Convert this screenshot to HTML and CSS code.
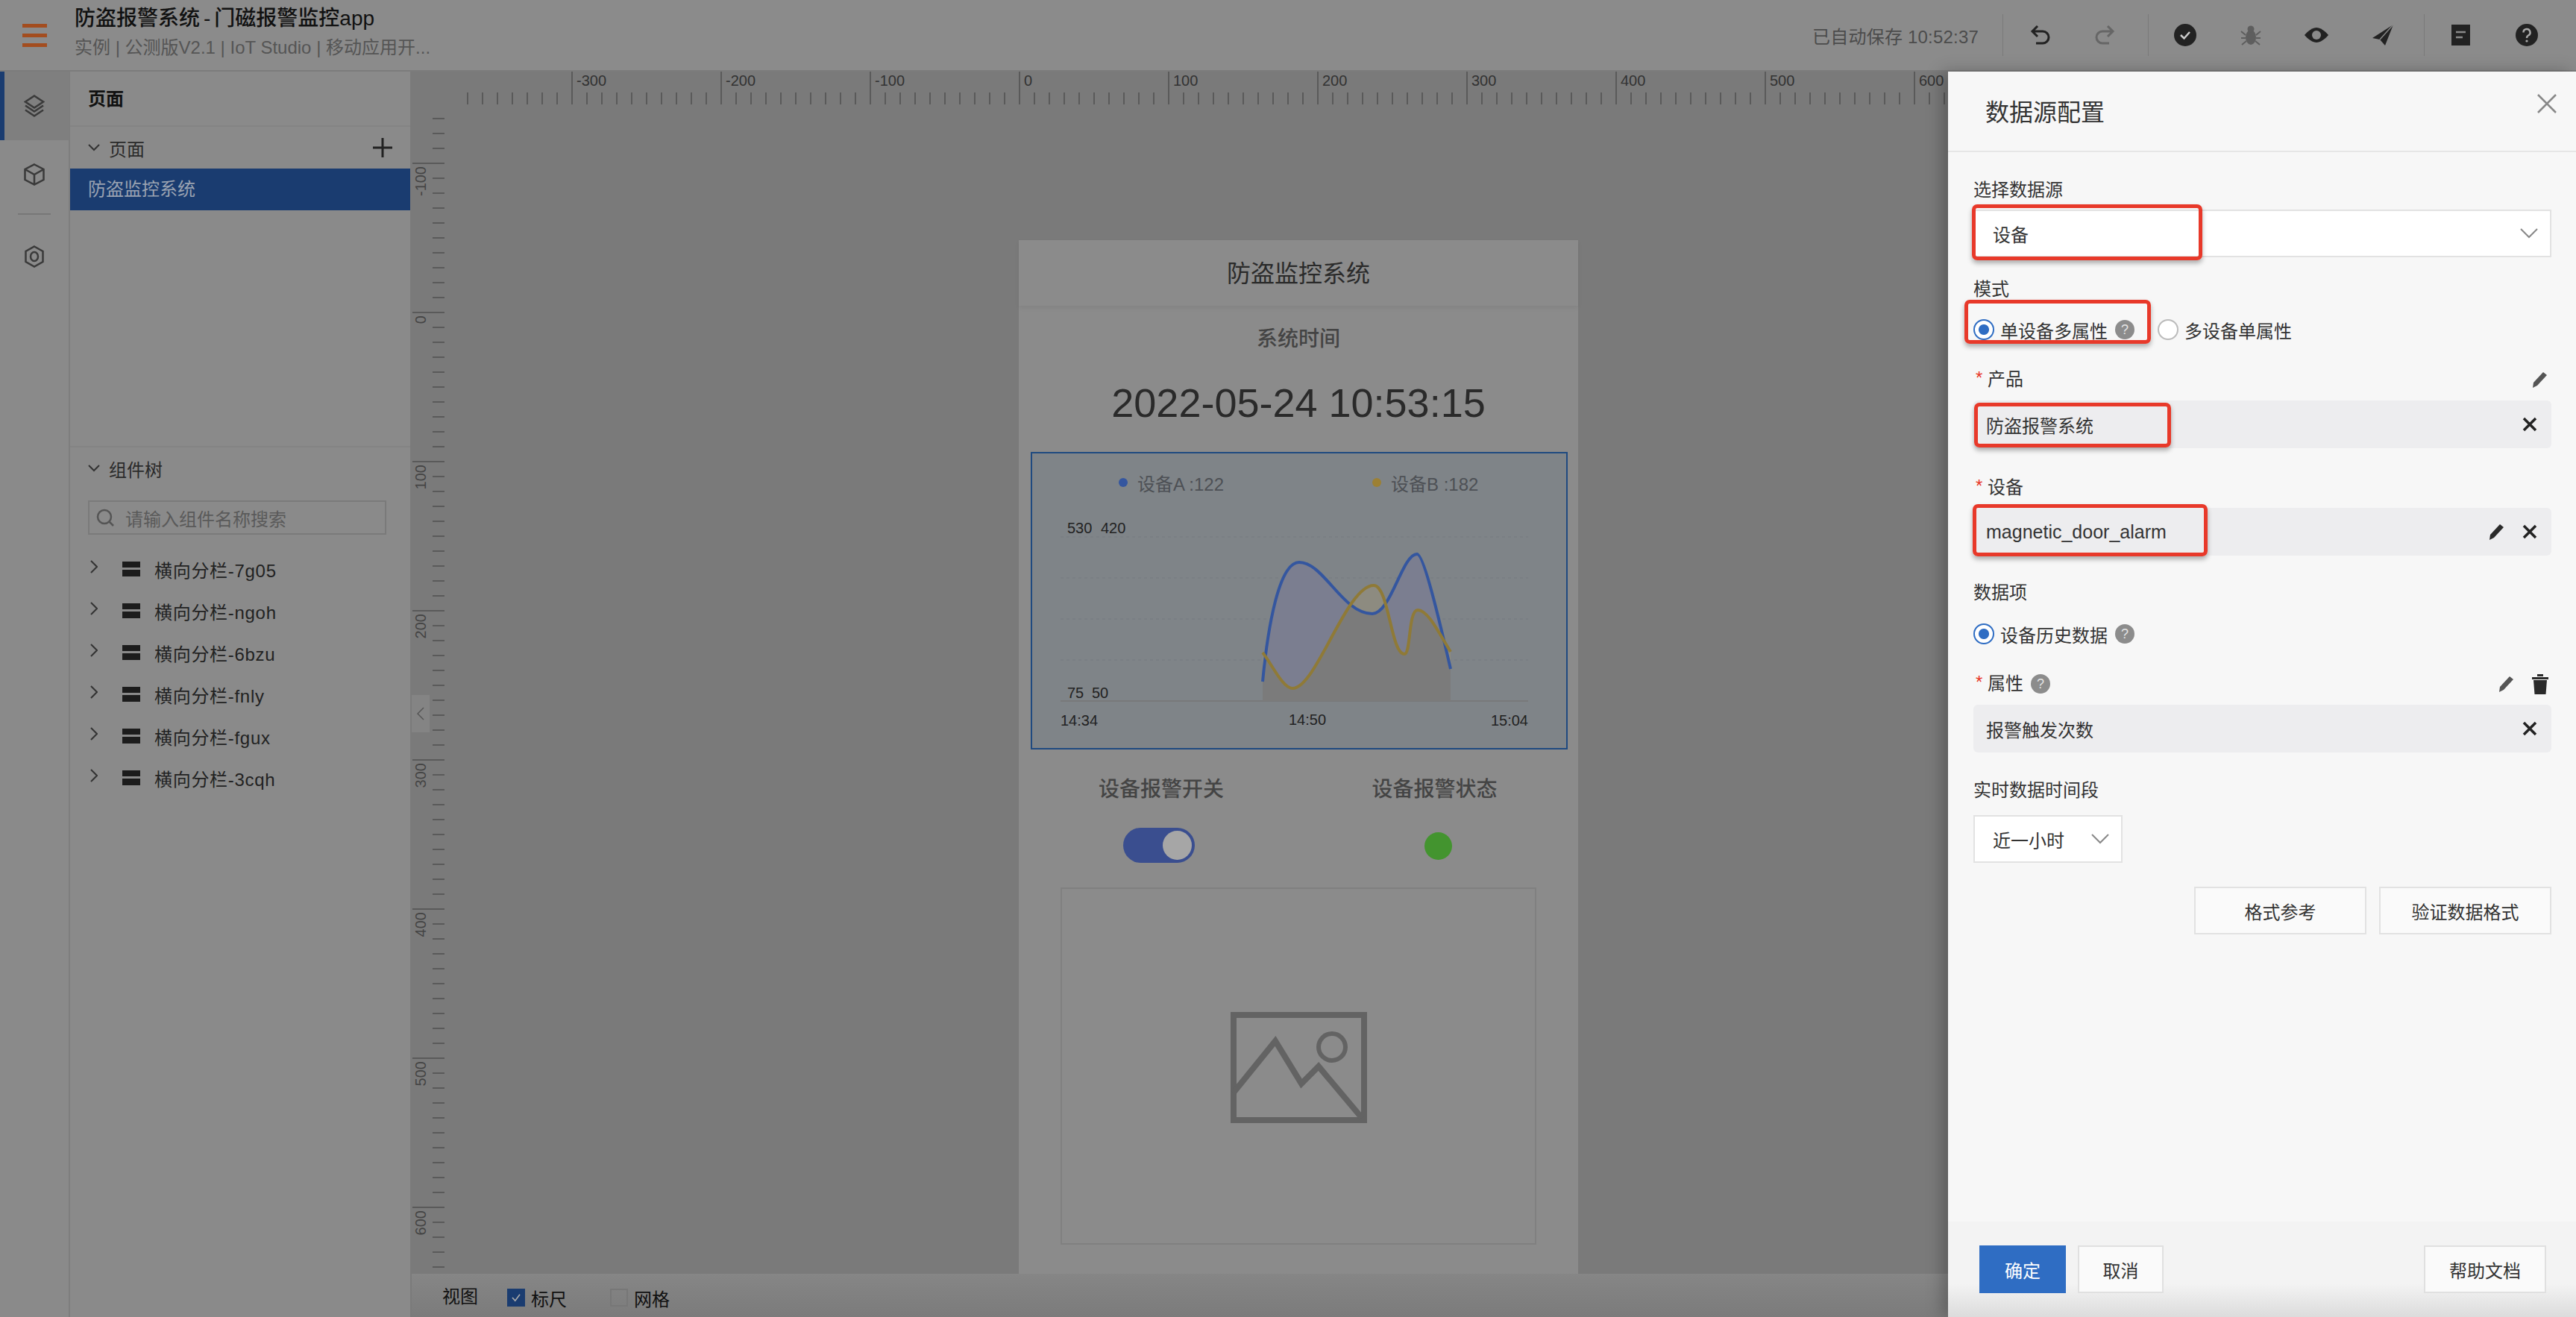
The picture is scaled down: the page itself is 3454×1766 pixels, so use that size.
FILE: index.html
```html
<!DOCTYPE html>
<html>
	<head>
		<title>防盗报警系统-门磁报警监控app</title>
		<meta charset="utf-8">
		<link rel="stylesheet" href="styles.css">
	</head>
	<body>
		<header class="topbar">
			<div class="burger"><i></i><i></i><i></i></div>
			<div class="app-title">
				<div class="app-name">防盗报警系统<span class="dash">-</span>门磁报警监控app</div>
				<div class="app-path">实例 | 公测版V2.1 | IoT Studio | 移动应用开...</div>
			</div>
			<div class="saved">已自动保存 10:52:37</div>
			<div class="tool-sep first"></div>
			<svg class="tool t-undo" viewBox="0 0 28 26"><path d="M10 1 3 8l7 7M4 8h13a8 8 0 0 1 0 16H8" fill="none" stroke="#222" stroke-width="3"/></svg>
			<svg class="tool t-redo" viewBox="0 0 28 26"><path d="M18 1l7 7-7 7M24 8H11a8 8 0 0 0 0 16h9" fill="none" stroke="#666" stroke-width="3"/></svg>
			<div class="tool-sep second"></div>
			<svg class="tool t-check" viewBox="0 0 30 30"><circle cx="15" cy="15" r="15" fill="#222"/><path d="M9 15l4.500 4.500L21 11" fill="none" stroke="#ccc" stroke-width="2.500"/></svg>
			<svg class="tool t-bug" viewBox="0 0 28 28"><ellipse cx="14" cy="17" rx="7" ry="10" fill="#5e5e5e"/><circle cx="14" cy="6" r="4.500" fill="#5e5e5e"/><path d="M1 9l6 5M27 9l-6 5M1 18h6M27 18h-6M2 27l6-5M26 27l-6-5" stroke="#5e5e5e" stroke-width="2"/></svg>
			<svg class="tool t-eye" viewBox="0 0 32 20"><path d="M16 0C24 0 32 10 32 10S24 20 16 20 0 10 0 10 8 0 16 0Z" fill="#222"/><circle cx="16" cy="10" r="6" fill="#8a8a8a"/></svg>
			<svg class="tool t-send" viewBox="0 0 28 28"><path d="M28 0 0 18l10 2 7 8Z" fill="#222"/><path d="M28 0 10 20" stroke="#8a8a8a" stroke-width="1.500"/></svg>
			<div class="tool-sep third"></div>
			<svg class="tool t-doc" viewBox="0 0 25 28"><rect width="25" height="28" fill="#222"/><path d="M6 10h13M6 17h9" stroke="#8a8a8a" stroke-width="2.500"/></svg>
			<svg class="tool t-help" viewBox="0 0 30 30"><circle cx="15" cy="15" r="15" fill="#222"/><path d="M10.500 11.500a4.500 4.500 0 1 1 6.500 4c-1.500.8-2 1.500-2 3.500" fill="none" stroke="#aaa" stroke-width="2.500"/><circle cx="15" cy="23" r="1.600" fill="#aaa"/></svg>
		</header>

		<div class="workspace">
			<nav class="rail">
				<div class="rail-item active">
					<svg viewBox="0 0 28 29"><path d="M14 1 26 9l-12 8L2 9Z" fill="none" stroke="#3a3a3a" stroke-width="2.500"/><path d="M2 14l12 8 12-8M2 20l12 8 12-8" fill="none" stroke="#3a3a3a" stroke-width="2.500"/></svg>
				</div>
				<div class="rail-item">
					<svg viewBox="0 0 28 30"><path d="M14 1.500 26.500 8v14L14 28.500 1.500 22V8Z M1.500 8 14 15l12.500-7M14 15v13" fill="none" stroke="#3a3a3a" stroke-width="2.500"/></svg>
				</div>
				<div class="rail-sep"></div>
				<div class="rail-item">
					<svg viewBox="0 0 26 30"><path d="M13 1.500 24.500 8v14L13 28.500 1.500 22V8Z" fill="none" stroke="#3a3a3a" stroke-width="2.500"/><ellipse cx="13" cy="15" rx="5" ry="6" fill="none" stroke="#3a3a3a" stroke-width="2.500"/></svg>
				</div>
			</nav>

			<aside class="pages">
				<div class="pages-head">页面</div>
				<div class="pages-top">
					<div class="tree-head">
						<svg class="chev-d" viewBox="0 0 16 10"><path d="M1 1l7 7 7-7" fill="none" stroke="#333" stroke-width="2"/></svg>
						<span>页面</span>
						<svg class="plus" viewBox="0 0 26 26"><path d="M13 0v26M0 13h26" stroke="#222" stroke-width="3"/></svg>
					</div>
					<div class="page-row">防盗监控系统</div>
				</div>
				<div class="pages-tree">
					<div class="tree-head">
						<svg class="chev-d" viewBox="0 0 16 10"><path d="M1 1l7 7 7-7" fill="none" stroke="#333" stroke-width="2"/></svg>
						<span>组件树</span>
					</div>
					<div class="search">
						<svg viewBox="0 0 24 24"><circle cx="11" cy="11" r="9" fill="none" stroke="#555" stroke-width="2.500"/><path d="M17 17l6 6" stroke="#555" stroke-width="2.500"/></svg>
						<span>请输入组件名称搜索</span>
					</div>
					<div class="node"><svg class="chev-r" viewBox="0 0 10 18"><path d="M1 1l8 8-8 8" fill="none" stroke="#333" stroke-width="2"/></svg><i class="bars"></i>横向分栏-7g05</div>
					<div class="node"><svg class="chev-r" viewBox="0 0 10 18"><path d="M1 1l8 8-8 8" fill="none" stroke="#333" stroke-width="2"/></svg><i class="bars"></i>横向分栏-ngoh</div>
					<div class="node"><svg class="chev-r" viewBox="0 0 10 18"><path d="M1 1l8 8-8 8" fill="none" stroke="#333" stroke-width="2"/></svg><i class="bars"></i>横向分栏-6bzu</div>
					<div class="node"><svg class="chev-r" viewBox="0 0 10 18"><path d="M1 1l8 8-8 8" fill="none" stroke="#333" stroke-width="2"/></svg><i class="bars"></i>横向分栏-fnly</div>
					<div class="node"><svg class="chev-r" viewBox="0 0 10 18"><path d="M1 1l8 8-8 8" fill="none" stroke="#333" stroke-width="2"/></svg><i class="bars"></i>横向分栏-fgux</div>
					<div class="node"><svg class="chev-r" viewBox="0 0 10 18"><path d="M1 1l8 8-8 8" fill="none" stroke="#333" stroke-width="2"/></svg><i class="bars"></i>横向分栏-3cqh</div>
				</div>
			</aside>

			<main class="canvas">
				<div class="ruler-top">
					<span>-300</span><span>-200</span><span>-100</span><span>0</span><span>100</span><span>200</span><span>300</span><span>400</span><span>500</span><span>600</span>
				</div>
				<div class="canvas-mid">
					<div class="ruler-left">
						<div><span>-100</span></div><div><span>0</span></div><div><span>100</span></div><div><span>200</span></div><div><span>300</span></div><div><span>400</span></div><div><span>500</span></div><div><span>600</span></div>
					</div>
					<div class="collapse"><svg viewBox="0 0 10 18"><path d="M9 1 1 9l8 8" fill="none" stroke="#555" stroke-width="1.500"/></svg></div>
					<div class="stage">
						<div class="phone">
							<div class="phone-head">防盗监控系统</div>
							<div class="sys-label">系统时间</div>
							<div class="sys-time">2022-05-24 10:53:15</div>
							<div class="chart">
								<div class="legend">
									<div class="legend-item"><i class="dot-a"></i>设备A :122</div>
									<div class="legend-item"><i class="dot-b"></i>设备B :182</div>
								</div>
								<svg class="plot" viewBox="1384 688 716 315">
									<defs>
										<clipPath id="under_a"><path d="M1693 914C1700 840 1715 754 1742 754C1775 754 1800 823 1840 823C1865 823 1880 743 1900 743C1908 743 1925 810 1945 897V940H1693Z"/></clipPath>
									</defs>
									<g class="grid-lines">
										<path d="M1422 720H2049M1422 775H2049M1422 830H2049M1422 885H2049"/>
									</g>
									<path d="M1422 940H2049" stroke="#767676" stroke-width="1.500"/>
									<path fill="#7b7e90" d="M1693 914C1700 840 1715 754 1742 754C1775 754 1800 823 1840 823C1865 823 1880 743 1900 743C1908 743 1925 810 1945 897V940H1693Z"/>
									<path fill="#8d8b80" d="M1693 875C1705 890 1720 923 1733 923C1765 923 1805 785 1842 785C1862 785 1865 877 1883 877C1892 877 1888 818 1901 818C1915 818 1930 850 1945 874V940H1693Z"/>
									<path fill="#7b7b7b" clip-path="url(#under_a)" d="M1693 875C1705 890 1720 923 1733 923C1765 923 1805 785 1842 785C1862 785 1865 877 1883 877C1892 877 1888 818 1901 818C1915 818 1930 850 1945 874V940H1693Z"/>
									<path fill="none" stroke="#34569f" stroke-width="4" d="M1693 914C1700 840 1715 754 1742 754C1775 754 1800 823 1840 823C1865 823 1880 743 1900 743C1908 743 1925 810 1945 897"/>
									<path fill="none" stroke="#8f7a37" stroke-width="4" d="M1693 875C1705 890 1720 923 1733 923C1765 923 1805 785 1842 785C1862 785 1865 877 1883 877C1892 877 1888 818 1901 818C1915 818 1930 850 1945 874"/>
									<text x="1431" y="715">530</text>
									<text x="1476" y="715">420</text>
									<text x="1431" y="936">75</text>
									<text x="1464" y="936">50</text>
									<text x="1422" y="973">14:34</text>
									<text x="1753" y="972" text-anchor="middle">14:50</text>
									<text x="2049" y="973" text-anchor="end">15:04</text>
								</svg>
							</div>
							<div class="alarm-row">
								<div class="alarm">
									<div class="alarm-label">设备报警开关</div>
									<div class="switch"><i></i></div>
								</div>
								<div class="alarm">
									<div class="alarm-label">设备报警状态</div>
									<div class="status"></div>
								</div>
							</div>
							<div class="image-box">
								<svg viewBox="0 0 183 149"><path d="M4 4h175v141H4Z" fill="none" stroke="#636363" stroke-width="8"/><path d="M4 108 60 39 95 96 118 73 176 142" fill="none" stroke="#636363" stroke-width="8"/><circle cx="136" cy="47" r="18" fill="none" stroke="#636363" stroke-width="6"/></svg>
							</div>
						</div>
					</div>
				</div>
				<div class="viewbar">
					<span class="view-title">视图</span>
					<label class="view-check"><i class="box on"><svg viewBox="0 0 24 24"><path d="M6 12l4.500 5L18 7" fill="none" stroke="#aaa" stroke-width="2"/></svg></i>标尺</label>
					<label class="view-check"><i class="box"></i>网格</label>
				</div>
			</main>
		</div>

		<section class="drawer">
			<div class="drawer-head">
				<span>数据源配置</span>
				<svg viewBox="0 0 26 26"><path d="M1 1l24 24M25 1 1 25" stroke="#888" stroke-width="2.500"/></svg>
			</div>
			<div class="drawer-body">
				<div class="item">
					<div class="label gap-10">选择数据源</div>
					<div class="select">设备<svg class="chev-s" viewBox="0 0 24 14"><path d="M1 1l11 11L23 1" fill="none" stroke="#888" stroke-width="2"/></svg></div>
					<div class="mark mark-source"></div>
				</div>
				<div class="item tight">
					<div class="label gap-22">模式</div>
					<div class="radios">
						<span class="radio on"></span>单设备多属性<span class="help">?</span>
						<span class="radio"></span>多设备单属性
					</div>
					<div class="mark mark-mode"></div>
				</div>
				<div class="item">
					<div class="label gap-12"><b>*</b>产品<svg class="pen end" viewBox="0 0 22 24"><use href="#pen_shape"/></svg></div>
					<div class="value">防盗报警系统<svg class="close" viewBox="0 0 20 20"><use href="#close_shape"/></svg></div>
					<div class="mark mark-product"></div>
				</div>
				<div class="item wide">
					<div class="label gap-11"><b>*</b>设备</div>
					<div class="value"><span class="latin">magnetic_door_alarm</span><svg class="pen dark" viewBox="0 0 22 24"><use href="#pen_shape"/></svg><svg class="close" viewBox="0 0 20 20"><use href="#close_shape"/></svg></div>
					<div class="mark mark-device"></div>
				</div>
				<div class="item tighter">
					<div class="label gap-23">数据项</div>
					<div class="radios"><span class="radio on"></span>设备历史数据<span class="help">?</span></div>
				</div>
				<div class="item">
					<div class="label gap-12"><b>*</b>属性<span class="help">?</span><svg class="pen end-2" viewBox="0 0 22 24"><use href="#pen_shape"/></svg><svg class="trash" viewBox="0 0 22 28"><path d="M0 5h22v3H0ZM7 1h8v3H7ZM2 9h18l-1.500 19h-15Z" fill="#2a2a2a"/></svg></div>
					<div class="value">报警触发次数<svg class="close" viewBox="0 0 20 20"><use href="#close_shape"/></svg></div>
				</div>
				<div class="item">
					<div class="label gap-17">实时数据时间段</div>
					<div class="select short">近一小时<svg class="chev-s" viewBox="0 0 24 14"><path d="M1 1l11 11L23 1" fill="none" stroke="#888" stroke-width="2"/></svg></div>
				</div>
				<div class="format-btns">
					<button>格式参考</button>
					<button>验证数据格式</button>
				</div>
			</div>
			<div class="drawer-foot">
				<button class="primary">确定</button>
				<button class="cancel">取消</button>
				<button class="docs">帮助文档</button>
			</div>
		</section>

		<svg class="shapes" width="0" height="0">
			<defs>
				<g id="pen_shape"><path d="M15 2l5 4L7 20l-6 3 1-7Z" fill="currentColor"/></g>
				<g id="close_shape"><path d="M2 2l16 16M18 2 2 18" stroke="#222" stroke-width="3.500"/></g>
			</defs>
		</svg>
	</body>
</html>
```

FILE: styles.css
```css
html{
	font-family: "Liberation Sans", "Noto Sans CJK SC", sans-serif;
	font-size: 24px;
}
body{
	margin: 0;
	width: 3454px;
	height: 1766px;
	overflow: hidden;
	position: relative;
	background-color: #7a7a7a;
	color: #222;
}
i{
	display: block;
}
button{
	font: inherit;
}

/* top bar */
.topbar{
	height: 94px;
	border-bottom: 2px solid #7c7c7c;
	background-color: #8b8b8b;
	display: flex;
	align-items: center;
}
.burger{
	width: 33px;
	margin: 0 37px 0 30px;
}
.burger i{
	height: 5px;
	margin: 8px 0;
	background-color: #a34d1f;
}
.app-title{
	flex: 1;
	margin-top: -6px;
}
.app-name{
	font-size: 28px;
	line-height: 38px;
	font-weight: 500;
	color: #111;
}
.dash{
	padding: 0 5px;
}
.app-path{
	line-height: 36px;
	margin-top: 2px;
	color: #555;
}
.saved{
	color: #4c4c4c;
	margin-right: 32px;
	letter-spacing: 0.2px;
}
.tool-sep{
	width: 1px;
	height: 56px;
	background-color: #7a7a7a;
}
.tool{
	display: block;
}
.t-undo{ width: 28px; height: 26px; margin-left: 36px; }
.t-redo{ width: 28px; height: 26px; margin: 0 44px 0 58px; }
.t-check{ width: 30px; height: 30px; margin-left: 34px; }
.t-bug{ width: 28px; height: 28px; margin-left: 59px; }
.t-eye{ width: 32px; height: 20px; margin-left: 58px; }
.t-send{ width: 28px; height: 28px; margin: 0 41px 0 59px; }
.t-doc{ width: 25px; height: 28px; margin-left: 36px; }
.t-help{ width: 30px; height: 30px; margin: 0 51px 0 61px; }

/* main columns */
.workspace{
	display: flex;
	height: 1670px;
}
.rail{
	width: 92px;
	background-color: #8a8a8a;
	border-right: 2px solid #7e7e7e;
}
.rail-item{
	height: 92px;
	display: flex;
	align-items: center;
	justify-content: center;
}
.rail-item svg{
	width: 28px;
	height: 30px;
}
.rail-item.active{
	border-left: 6px solid #1a3c70;
	background-color: #7f7f7f;
	padding-right: 6px;
}
.rail-sep{
	height: 2px;
	margin: 6px 24px 10px;
	background-color: #777;
}
.pages{
	width: 456px;
	background-color: #8a8a8a;
	display: flex;
	flex-direction: column;
	flex: none;
}
.pages-head{
	height: 72px;
	line-height: 74px;
	padding-left: 24px;
	font-weight: 700;
	color: #111;
	border-bottom: 2px solid #848484;
}
.pages-top{
	height: 428px;
	border-bottom: 2px solid #848484;
}
.tree-head{
	height: 56px;
	display: flex;
	align-items: center;
	padding-left: 24px;
	color: #2a2a2a;
}
.chev-d{
	width: 16px;
	height: 10px;
	margin-right: 12px;
}
.plus{
	width: 26px;
	height: 26px;
	margin-left: auto;
	margin-right: 24px;
}
.page-row{
	height: 56px;
	line-height: 56px;
	padding-left: 24px;
	background-color: #1a3c70;
	color: #9aa3b2;
}
.search{
	width: 396px;
	height: 42px;
	margin: 15px 0 18px 24px;
	border: 2px solid #7a7a7a;
	display: flex;
	align-items: center;
	color: #5a5a5a;
}
.search svg{
	width: 24px;
	height: 24px;
	margin: 0 15px 0 9px;
}
.node{
	height: 56px;
	display: flex;
	align-items: center;
	padding-left: 27px;
	color: #222;
	letter-spacing: 0.7px;
}
.chev-r{
	width: 10px;
	height: 18px;
	margin: -6px 33px 0 0;
}
.bars{
	width: 24px;
	height: 20px;
	margin-right: 19px;
	background: linear-gradient(#1c1c1c 0 8px, transparent 8px 11px, #1c1c1c 11px);
}

/* canvas and rulers */
.canvas{
	flex: 1;
	min-width: 0;
	display: flex;
	flex-direction: column;
	background-color: #7a7a7a;
}
.ruler-top{
	height: 44px;
	flex: none;
	padding-left: 216px;
	display: flex;
	overflow: hidden;
	background: repeating-linear-gradient(90deg, #5a5a5a 0 2px, transparent 2px 20px) 76px 28px / calc(100% - 76px) 16px no-repeat;
}
.ruler-top span{
	flex: none;
	width: 193px;
	padding-left: 5px;
	border-left: 2px solid #5a5a5a;
	font-size: 20px;
	line-height: 24px;
	color: #333;
}
.canvas-mid{
	flex: 1;
	min-height: 0;
	display: flex;
	position: relative;
}
.ruler-left{
	width: 46px;
	flex: none;
	padding-top: 78px;
	overflow: hidden;
	box-sizing: border-box;
	background: repeating-linear-gradient(180deg, #5a5a5a 0 2px, transparent 2px 20px) 30px 18px / 16px 100% no-repeat;
}
.ruler-left div{
	height: 198px;
	margin-left: 3px;
	border-top: 2px solid #5a5a5a;
}
.ruler-left span{
	display: block;
	width: 22px;
	writing-mode: vertical-rl;
	transform: rotate(180deg);
	font-size: 20px;
	line-height: 22px;
	text-align: left;
	padding-bottom: 3px;
	color: #444;
}
.collapse{
	position: absolute;
	left: 2px;
	top: 792px;
	width: 24px;
	height: 50px;
	background-color: #848484;
	display: flex;
	align-items: center;
	justify-content: center;
}
.collapse svg{
	width: 10px;
	height: 18px;
}
.stage{
	flex: 1;
	min-width: 0;
	padding: 182px 0 0 770px;
	overflow: hidden;
}
.viewbar{
	height: 58px;
	flex: none;
	margin-left: 2px;
	display: flex;
	align-items: center;
	background: linear-gradient(#868686, #7b7b7b);
	color: #111;
	padding-left: 41px;
}
.view-title{
	margin: -2px 39px 0 0;
}
.view-check{
	display: flex;
	align-items: center;
	width: 138px;
	margin-top: 6px;
}
.box{
	width: 20px;
	height: 20px;
	margin-right: 8px;
	border: 2px solid #777;
}
.box.on{
	background-color: #1a3c70;
	border-color: #1a3c70;
}
.box svg{
	display: block;
	width: 20px;
	height: 20px;
}

/* phone preview */
.phone{
	width: 750px;
	height: 1386px;
	background-color: #8b8b8b;
}
.phone-head{
	height: 88px;
	line-height: 90px;
	font-size: 32px;
	text-align: center;
	color: #2a2a2a;
	box-shadow: 0 3px 6px rgba(0, 0, 0, 0.06);
}
.sys-label{
	margin-top: 25px;
	line-height: 40px;
	font-size: 28px;
	font-weight: 500;
	text-align: center;
	color: #444;
}
.sys-time{
	margin-top: 33px;
	line-height: 64px;
	font-size: 54px;
	text-align: center;
	color: #2a2a2a;
}
.chart{
	width: 716px;
	height: 395px;
	margin: 34px 0 0 16px;
	border: 2px solid #1f4a80;
	background-color: #7f8488;
}
.legend{
	height: 78px;
	padding: 0 0 2px 116px;
	display: flex;
	align-items: center;
}
.legend-item{
	flex: none;
	width: 340px;
	display: flex;
	align-items: center;
	color: #4d5055;
}
.legend-item i{
	width: 12px;
	height: 12px;
	margin-right: 13px;
	border-radius: 50%;
}
.dot-a{
	background-color: #34569f;
}
.dot-b{
	background-color: #9c8034;
}
.plot{
	display: block;
	width: 716px;
	height: 315px;
}
.plot text{
	font-size: 20px;
	fill: #222;
}
.grid-lines path{
	stroke: #797e82;
	stroke-width: 1.500;
	stroke-dasharray: 4 4;
}
.alarm-row{
	display: flex;
	margin: 34px 0 0 16px;
}
.alarm{
	width: 350px;
	display: flex;
	flex-direction: column;
	align-items: center;
}
.alarm + .alarm{
	width: 383px;
}
.alarm-label{
	line-height: 40px;
	font-size: 28px;
	font-weight: 500;
	color: #444;
}
.switch{
	width: 96px;
	height: 47px;
	margin: 31px 6px 0 0;
	padding: 4px;
	box-sizing: border-box;
	border-radius: 24px;
	background-color: #3a4e8f;
}
.switch i{
	width: 39px;
	height: 39px;
	margin-left: auto;
	border-radius: 50%;
	background-color: #a6a6a6;
}
.status{
	width: 37px;
	height: 37px;
	margin: 37px 0 0 10px;
	border-radius: 50%;
	background-color: #43942f;
}
.image-box{
	width: 634px;
	height: 471px;
	margin: 33px 0 0 56px;
	padding-top: 4px;
	border: 2px solid #808080;
	display: flex;
	align-items: center;
	justify-content: center;
}
.image-box svg{
	width: 183px;
	height: 149px;
}

/* data source drawer */
.drawer{
	position: absolute;
	top: 96px;
	right: 0;
	bottom: 0;
	width: 842px;
	display: flex;
	flex-direction: column;
	background-color: #f7f7f7;
	box-shadow: -8px 0 20px rgba(0, 0, 0, 0.25);
	color: #333;
}
.drawer-head{
	height: 108px;
	flex: none;
	box-sizing: border-box;
	border-bottom: 2px solid #e6e6e6;
	display: flex;
	justify-content: space-between;
	padding: 34px 26px 0 50px;
	font-size: 32px;
	line-height: 42px;
}
.drawer-head svg{
	width: 26px;
	height: 26px;
	margin-top: -4px;
}
.drawer-body{
	flex: 1;
	padding: 0 33px 0 34px;
}
.item{
	position: relative;
	margin-top: 35px;
}
.item.tight{
	margin-top: 27px;
}
.item.wide{
	margin-top: 37px;
}
.item.tighter{
	margin-top: 34px;
}
.label{
	height: 32px;
	line-height: 32px;
	display: flex;
	align-items: center;
	color: #333;
}
.label b{
	font-weight: 400;
	color: #e8392a;
	width: 19px;
	padding-left: 3px;
	box-sizing: border-box;
	margin-top: -4px;
}
.gap-10{ margin-bottom: 10px; }
.gap-11{ margin-bottom: 11px; }
.gap-12{ margin-bottom: 12px; }
.gap-17{ margin-bottom: 17px; }
.gap-22{ margin-bottom: 22px; }
.gap-23{ margin-bottom: 23px; }
.select{
	height: 60px;
	border: 2px solid #e2e2e2;
	background-color: #fff;
	display: flex;
	align-items: center;
	justify-content: space-between;
	padding: 0 16px 0 24px;
}
.select.short{
	width: 156px;
}
.chev-s{
	width: 24px;
	height: 14px;
}
.radios{
	height: 32px;
	display: flex;
	align-items: center;
}
.radio{
	width: 24px;
	height: 24px;
	margin-right: 8px;
	border: 2px solid #bbb;
	border-radius: 50%;
	background-color: #fff;
}
.radio.on{
	border-color: #2f6dc3;
	background: radial-gradient(circle, #2f6dc3 0 6.500px, #fff 7.500px);
}
.help + .radio{
	margin-left: 31px;
}
.help{
	width: 26px;
	height: 26px;
	margin-left: 10px;
	border-radius: 50%;
	background-color: #8c8c8c;
	color: #e4e4e4;
	font-size: 18px;
	line-height: 26px;
	text-align: center;
}
.value{
	height: 64px;
	border-radius: 6px;
	background-color: #ededef;
	display: flex;
	align-items: center;
	padding: 0 19px 0 17px;
}
.latin{
	font-size: 25px;
}
.close{
	width: 20px;
	height: 20px;
	margin-left: auto;
}
.pen{
	width: 22px;
	height: 24px;
	color: #555;
}
.pen.end{
	margin-left: auto;
	margin-right: 4px;
}
.pen.end-2{
	margin-left: auto;
}
.pen.dark{
	margin-left: auto;
	margin-right: 23px;
	color: #2a2a2a;
}
.pen.dark + .close{
	margin-left: 0;
}
.trash{
	width: 22px;
	height: 28px;
	margin: 0 4px 0 23px;
}
.format-btns{
	display: flex;
	justify-content: flex-end;
	gap: 17px;
	margin-top: 32px;
}
.format-btns button{
	width: 231px;
	height: 64px;
	border: 2px solid #e2e2e2;
	background-color: #fafafa;
	color: #333;
}
.drawer-foot{
	height: 128px;
	flex: none;
	box-sizing: border-box;
	padding: 32px 40px 0 42px;
	display: flex;
	align-items: flex-start;
	background: linear-gradient(#f3f3f3 65%, #dcdcdc);
}
.drawer-foot button{
	height: 64px;
	border: 2px solid #e0e0e0;
	background-color: #fafafa;
	color: #333;
}
.drawer-foot .primary{
	width: 116px;
	border: none;
	background-color: #2f6dc3;
	color: #fff;
}
.drawer-foot .cancel{
	width: 115px;
	margin-left: 16px;
}
.drawer-foot .docs{
	width: 164px;
	margin-left: auto;
}

/* red annotation boxes over the form */
.mark{
	position: absolute;
	border: 5px solid #e8392a;
	border-radius: 7px;
	box-shadow: 0 4px 6px rgba(0, 0, 0, 0.3);
	box-sizing: border-box;
}
.mark-source{
	left: -2px;
	top: 35px;
	width: 309px;
	height: 75px;
}
.mark-mode{
	left: -12px;
	top: 30px;
	width: 250px;
	height: 59px;
}
.mark-product{
	left: 1px;
	top: 47px;
	width: 264px;
	height: 60px;
}
.mark-device{
	left: -1px;
	top: 38px;
	width: 315px;
	height: 70px;
}
.shapes{
	position: absolute;
}
```
